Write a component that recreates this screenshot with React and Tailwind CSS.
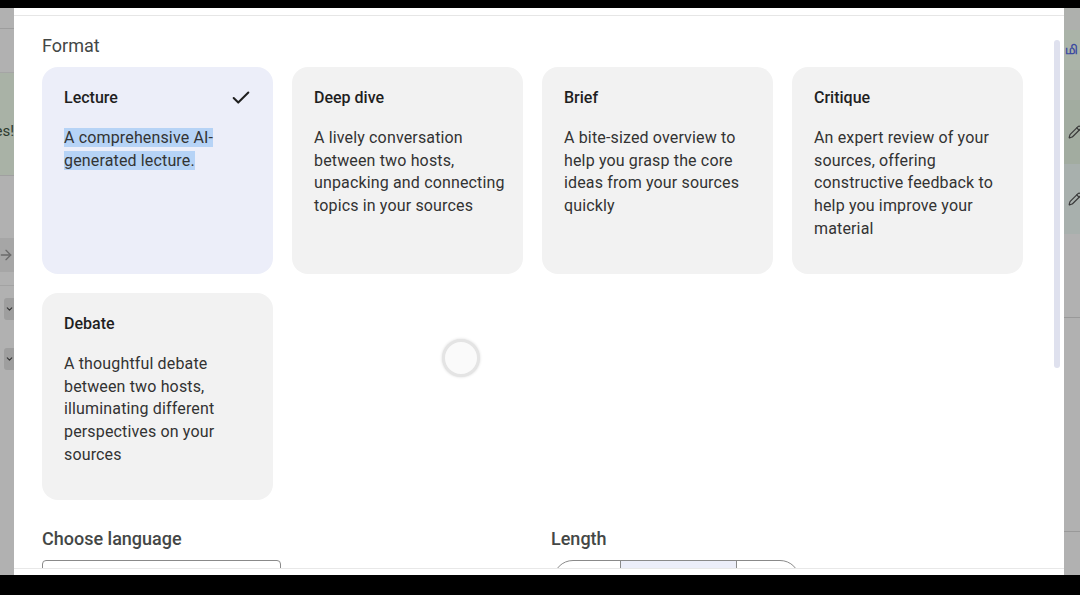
import { Check, ArrowRight, ChevronDown, Pencil } from 'lucide-react'

const formats = [
  { title: 'Lecture', desc: 'A comprehensive AI-generated lecture.', selected: true },
  { title: 'Deep dive', desc: 'A lively conversation between two hosts, unpacking and connecting topics in your sources' },
  { title: 'Brief', desc: 'A bite-sized overview to help you grasp the core ideas from your sources quickly' },
  { title: 'Critique', desc: 'An expert review of your sources, offering constructive feedback to help you improve your material' },
  { title: 'Debate', desc: 'A thoughtful debate between two hosts, illuminating different perspectives on your sources' },
]

function FormatCard({ item }) {
  return (
    <div
      className={
        item.selected
          ? 'h-[207px] rounded-2xl bg-[#eceef9] pl-[22px] pr-[16px] pt-[20px]'
          : 'h-[207px] rounded-2xl bg-[#f2f2f2] pl-[22px] pr-[16px] pt-[20px]'
      }
    >
      <div className="flex h-[22px] items-center justify-between">
        <span className="text-[16px] font-medium text-[#1f1f1f]">{item.title}</span>
        {item.selected && <Check size={22} strokeWidth={2.2} className="mr-[5px] text-[#1f1f1f]" />}
      </div>
      <p className="mt-[18px] text-[16px] leading-[22.7px] tracking-[0.15px] text-[#333]">
        {item.selected ? <span className="bg-[#b6d3f6]">{item.desc}</span> : item.desc}
      </p>
    </div>
  )
}

export default function App() {
  return (
    <div className="flex h-[595px] w-[1080px] flex-col overflow-hidden bg-black font-['Roboto',sans-serif]">
      <div className="h-[8px] shrink-0" />
      <div className="flex h-[567px] shrink-0">
        {/* page behind the dialog, left edge */}
        <div className="flex w-[14px] shrink-0 flex-col overflow-hidden bg-[#b1b1b1]">
          <div className="h-[21px] border-b border-[#9d9d9d]" />
          <div className="h-[44px] border-b border-[#a5a5a5]" />
          <div className="flex h-[102px] items-start justify-end bg-[#a9b2a6] pt-[49px]">
            <span className="whitespace-nowrap text-[15px] leading-[18px] text-[#2e3a2e]">Sources!</span>
          </div>
          <div className="h-[60px] border-t border-[#a0a0a0]" />
          <div className="flex h-[40px] items-center justify-end">
            <div className="flex h-[34px] w-[30px] shrink-0 items-center justify-end rounded-l-full bg-[#a6a6a6]">
              <ArrowRight size={16} className="text-[#6b6b6b]" />
            </div>
          </div>
          <div className="mt-[10px] border-t border-[#a3a3a3]" />
          <div className="mt-[12px] flex h-[22px] justify-end">
            <div className="flex w-[10px] items-center rounded-l-[3px] bg-[#9e9e9e]">
              <ChevronDown size={12} strokeWidth={3} className="ml-[1px] text-[#333]" />
            </div>
          </div>
          <div className="mt-[28px] flex h-[22px] justify-end">
            <div className="flex w-[10px] items-center rounded-l-[3px] bg-[#9e9e9e]">
              <ChevronDown size={12} strokeWidth={3} className="ml-[1px] text-[#333]" />
            </div>
          </div>
        </div>

        {/* dialog */}
        <div className="relative flex w-[1050px] shrink-0 flex-col bg-white">
          <div className="h-[8px] shrink-0 border-b border-[#e6e6e6]" />
          <div className="flex-1 overflow-hidden px-[28px]">
            <h2 className="mt-[18px] text-[18px] leading-[24px] text-[#444746]">Format</h2>
            <div className="mt-[9px] grid grid-cols-4 gap-[19px] pr-[13px]">
              {formats.map((f) => (
                <FormatCard key={f.title} item={f} />
              ))}
            </div>
            <div className="mt-[27px] flex">
              <div className="w-[509px]">
                <h3 className="text-[18px] font-medium leading-[24px] text-[#444746]">Choose language</h3>
                <div className="mt-[9px] h-[40px] w-[239px] rounded-[4px] border border-[#8a8a8a]" />
              </div>
              <div>
                <h3 className="text-[18px] font-medium leading-[24px] text-[#444746]">Length</h3>
                <div className="ml-[2px] mt-[9px] flex h-[40px] w-[247px] overflow-hidden rounded-full border border-[#8a8a8a]">
                  <div className="w-[67px] border-r border-[#8a8a8a]" />
                  <div className="w-[116px] border-r border-[#8a8a8a] bg-[#eceef9]" />
                  <div className="flex-1" />
                </div>
              </div>
            </div>
          </div>
          <div className="h-[7px] shrink-0 border-t border-[#e8e8e8]" />

          {/* scrollbar */}
          <div className="absolute left-[1040px] top-[32px] h-[328px] w-[6px] rounded-full bg-[#dfe1ee]" />
          {/* loading spinner */}
          <div className="absolute left-[428px] top-[331px] h-[38px] w-[38px] rounded-full border-[3px] border-[#e4e4e4] bg-[#fafafa] shadow-[0_0_3px_rgba(0,0,0,0.15)]" />
        </div>

        {/* page behind the dialog, right edge */}
        <div className="flex w-[16px] shrink-0 flex-col overflow-hidden bg-[#b1b1b1]">
          <div className="h-[22px] bg-[#aeb0ad]" />
          <div className="flex h-[40px] items-center bg-[#aab3a8]">
            <span className="ml-[1px] whitespace-nowrap text-[13px] font-bold text-[#3b4aa0]">மி</span>
          </div>
          <div className="h-[30px] bg-[#a7aea5]" />
          <div className="flex h-[64px] items-center bg-[#a2aca0] pl-[4px]">
            <Pencil size={14} className="shrink-0 text-[#3a3a3a]" />
          </div>
          <div className="flex h-[70px] items-center bg-[#a8b0ad] pl-[4px]">
            <Pencil size={14} className="shrink-0 text-[#3a3a3a]" />
          </div>
          <div className="h-[84px] border-b border-[#999]" />
          <div className="h-[214px] border-b border-[#999]" />
        </div>
      </div>
      <div className="flex-1" />
    </div>
  )
}
